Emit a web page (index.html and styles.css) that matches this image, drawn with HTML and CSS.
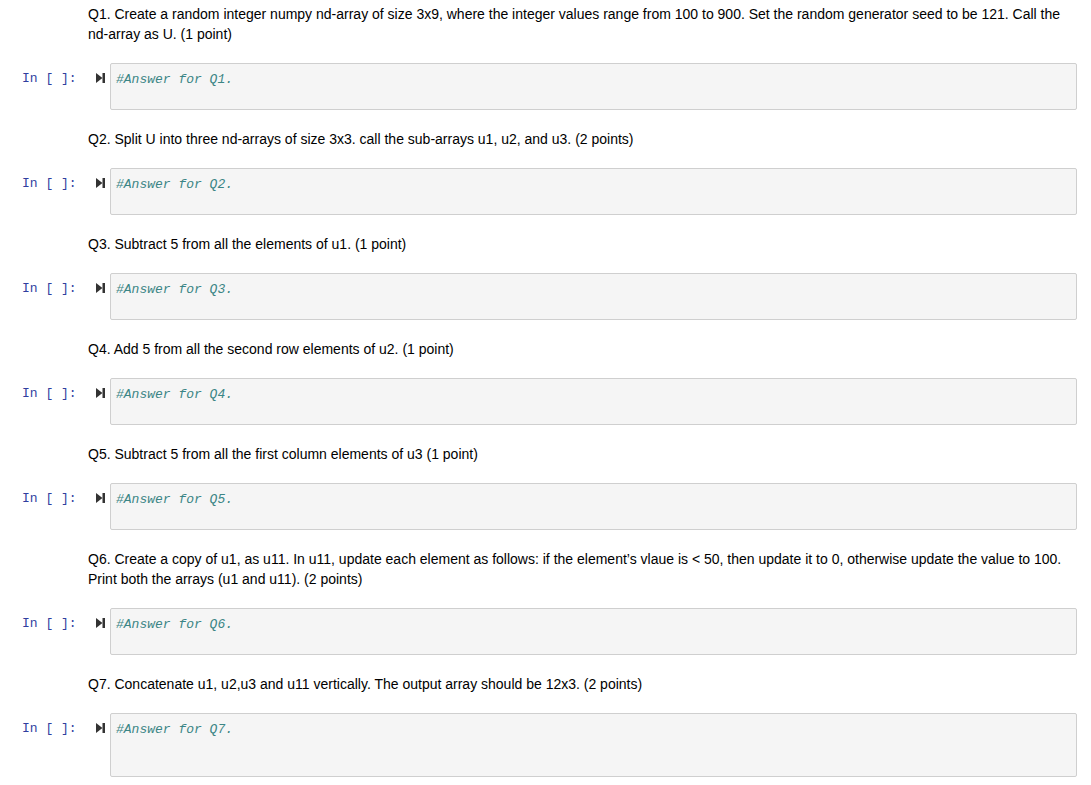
FILE: index.html
```html
<!DOCTYPE html>
<html lang="en">
<head>
  <meta charset="UTF-8">
  <title>Notebook</title>
  <link rel="stylesheet" href="styles.css">
</head>
<body>
  <div class="notebook">
    <div class="text-cell">Q1. Create a random integer numpy nd-array of size 3x9, where the integer values range from 100 to 900. Set the random generator seed to be 121. Call the nd-array as U. (1 point)</div>
    <div class="code-cell">
      <div class="prompt">In [ ]:</div>
      <div class="run"><svg width="9" height="10" viewBox="0 0 9 10"><path d="M0 0 L6.5 5 L0 10 Z" fill="#333"/><rect x="6.5" y="0" width="2.5" height="10" fill="#333"/></svg></div>
      <div class="input"><span class="comment">#Answer for Q1.</span></div>
    </div>

    <div class="text-cell">Q2. Split U into three nd-arrays of size 3x3. call the sub-arrays u1, u2, and u3. (2 points)</div>
    <div class="code-cell">
      <div class="prompt">In [ ]:</div>
      <div class="run"><svg width="9" height="10" viewBox="0 0 9 10"><path d="M0 0 L6.5 5 L0 10 Z" fill="#333"/><rect x="6.5" y="0" width="2.5" height="10" fill="#333"/></svg></div>
      <div class="input"><span class="comment">#Answer for Q2.</span></div>
    </div>

    <div class="text-cell">Q3. Subtract 5 from all the elements of u1. (1 point)</div>
    <div class="code-cell">
      <div class="prompt">In [ ]:</div>
      <div class="run"><svg width="9" height="10" viewBox="0 0 9 10"><path d="M0 0 L6.5 5 L0 10 Z" fill="#333"/><rect x="6.5" y="0" width="2.5" height="10" fill="#333"/></svg></div>
      <div class="input"><span class="comment">#Answer for Q3.</span></div>
    </div>

    <div class="text-cell">Q4. Add 5 from all the second row elements of u2. (1 point)</div>
    <div class="code-cell">
      <div class="prompt">In [ ]:</div>
      <div class="run"><svg width="9" height="10" viewBox="0 0 9 10"><path d="M0 0 L6.5 5 L0 10 Z" fill="#333"/><rect x="6.5" y="0" width="2.5" height="10" fill="#333"/></svg></div>
      <div class="input"><span class="comment">#Answer for Q4.</span></div>
    </div>

    <div class="text-cell">Q5. Subtract 5 from all the first column elements of u3 (1 point)</div>
    <div class="code-cell">
      <div class="prompt">In [ ]:</div>
      <div class="run"><svg width="9" height="10" viewBox="0 0 9 10"><path d="M0 0 L6.5 5 L0 10 Z" fill="#333"/><rect x="6.5" y="0" width="2.5" height="10" fill="#333"/></svg></div>
      <div class="input"><span class="comment">#Answer for Q5.</span></div>
    </div>

    <div class="text-cell">Q6. Create a copy of u1, as u11. In u11, update each element as follows: if the element’s vlaue is &lt; 50, then update it to 0, otherwise update the value to 100. Print both the arrays (u1 and u11). (2 points)</div>
    <div class="code-cell">
      <div class="prompt">In [ ]:</div>
      <div class="run"><svg width="9" height="10" viewBox="0 0 9 10"><path d="M0 0 L6.5 5 L0 10 Z" fill="#333"/><rect x="6.5" y="0" width="2.5" height="10" fill="#333"/></svg></div>
      <div class="input"><span class="comment">#Answer for Q6.</span></div>
    </div>

    <div class="text-cell">Q7. Concatenate u1, u2,u3 and u11 vertically. The output array should be 12x3. (2 points)</div>
    <div class="code-cell">
      <div class="prompt">In [ ]:</div>
      <div class="run"><svg width="9" height="10" viewBox="0 0 9 10"><path d="M0 0 L6.5 5 L0 10 Z" fill="#333"/><rect x="6.5" y="0" width="2.5" height="10" fill="#333"/></svg></div>
      <div class="input tall"><span class="comment">#Answer for Q7.</span></div>
    </div>
  </div>
</body>
</html>
```

FILE: styles.css
```css
/* Page */
body {
  margin: 0;
  background: #fff;
  color: #000;
  font-family: "Liberation Sans", Arial, sans-serif;
  font-size: 14px;
}

.notebook {
  padding: 4px 14px 0 0;
  display: flex;
  flex-direction: column;
  gap: 19px;
}

/* Markdown cells */
.text-cell {
  padding-left: 88px;
  line-height: 20px;
}

/* Code cells */
.code-cell {
  display: flex;
  align-items: flex-start;
}

.prompt {
  width: 66px;
  padding-left: 22px;
  padding-top: 7px;
  font-family: "Liberation Mono", monospace;
  font-size: 13px;
  line-height: 17px;
  color: #303f9f;
}

.run {
  width: 22px;
  padding: 10px 0 0 8px;
  box-sizing: border-box;
  line-height: 0;
}

/* Input area */
.input {
  flex: 1;
  background: #f5f5f5;
  border: 1px solid #cfcfcf;
  border-radius: 2px;
  padding: 7px 5px 0;
  height: 38px;
  font-family: "Liberation Mono", monospace;
  font-size: 13px;
  line-height: 17px;
}

.input.tall {
  height: 55px;
}

.comment {
  color: #3b8585;
  font-style: italic;
}
```
